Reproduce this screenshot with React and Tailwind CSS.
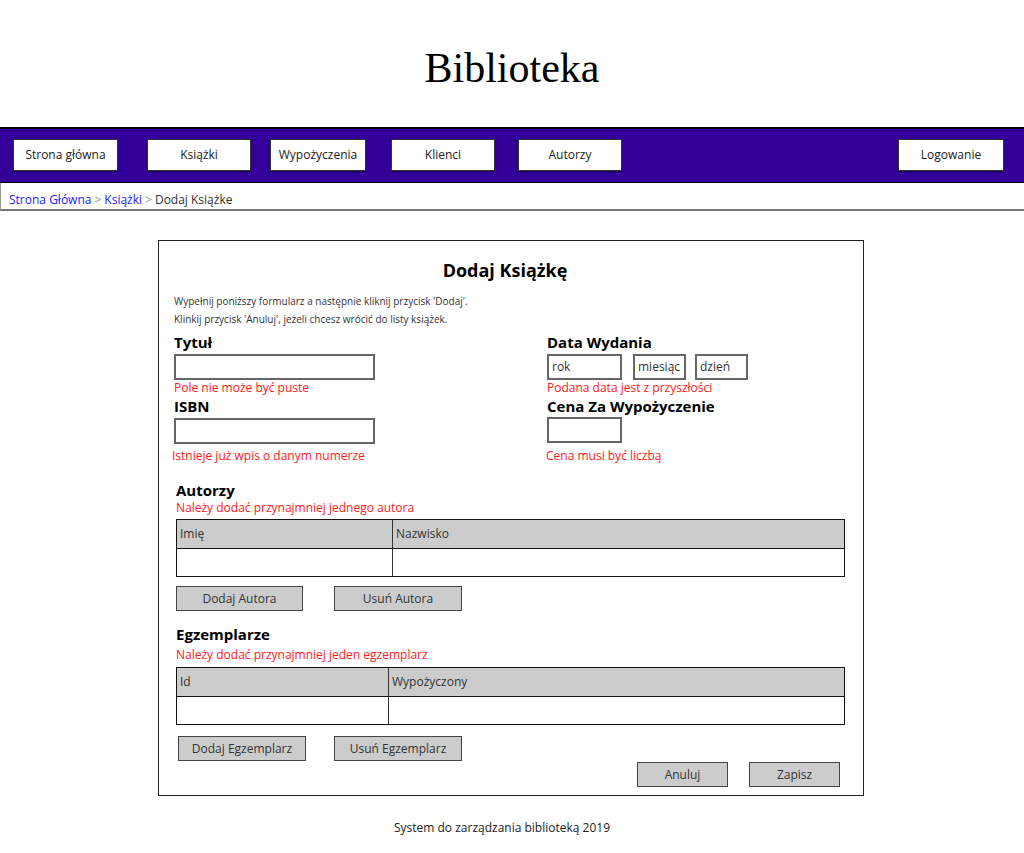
import React from "react";

const navItems = [
  { label: "Strona główna", cls: "w-[105px]" },
  { label: "Książki", cls: "w-[104px] ml-[29px]" },
  { label: "Wypożyczenia", cls: "w-[96px] ml-[19px]" },
  { label: "Klienci", cls: "w-[104px] ml-[25px]" },
  { label: "Autorzy", cls: "w-[104px] ml-[23px]" },
];

function NavButton({ label, cls }) {
  return (
    <div
      className={`h-[32px] bg-white border border-[#333] shadow-[0_1px_1px_rgba(0,0,0,0.4)] flex items-center justify-center text-[12px] text-[#222] ${cls}`}
    >
      {label}
    </div>
  );
}

function GrayButton({ children, cls = "" }) {
  return (
    <div
      className={`h-[25px] bg-[#cccccc] border-[1.5px] border-[#444] flex items-center justify-center text-[12px] text-[#333] ${cls}`}
    >
      {children}
    </div>
  );
}

function Box({ cls = "", children }) {
  return (
    <div
      className={`h-[26px] border-2 border-[#666] bg-white px-[3px] flex items-center text-[12px] text-[#333] ${cls}`}
    >
      {children}
    </div>
  );
}

function Label({ children, cls = "" }) {
  return (
    <div className={`h-[20px] leading-[20px] text-[15px] font-bold text-black ${cls}`}>
      {children}
    </div>
  );
}

function Err({ children, cls = "" }) {
  return (
    <div className={`h-[16px] leading-[16px] text-[12px] text-[#ff1a1a] ${cls}`}>
      {children}
    </div>
  );
}

function Table({ left, right, split }) {
  return (
    <div className="w-[669px] border-[1.5px] border-[#111] text-[12px] text-[#333]">
      <div className="flex h-[29px] bg-[#cccccc] border-b-[1.5px] border-[#111]">
        <div className={`${split} border-r border-[#333] px-[3px] flex items-center`}>{left}</div>
        <div className="flex-1 px-[3px] flex items-center">{right}</div>
      </div>
      <div className="flex h-[27px] bg-white">
        <div className={`${split} border-r border-[#333]`} />
        <div className="flex-1" />
      </div>
    </div>
  );
}

export default function App() {
  return (
    <div className="min-h-[853px] bg-white font-['Open_Sans',sans-serif]">
      <h1 className="h-[127px] pt-[44px] text-center text-[42px] leading-[48px] font-['Liberation_Serif',serif] text-black">
        Biblioteka
      </h1>

      {/* NAV */}
      <nav className="h-[56px] bg-[#330099] border-t-2 border-b border-black flex items-start pt-[10px] pl-[13px] pr-[20px]">
        {navItems.map((n) => (
          <NavButton key={n.label} {...n} />
        ))}
        <NavButton label="Logowanie" cls="w-[106px] ml-auto" />
      </nav>

      {/* BREADCRUMB */}
      <div className="h-[28px] border-b-2 border-[#777] border-l border-l-[#999] pt-[8px] leading-[18px] pl-[8px] text-[12px] text-[#333]">
        <span className="text-[#2222ff]">Strona Główna</span>
        <span className="text-[#999] mx-[3px]">&gt;</span>
        <span className="text-[#2222ff]">Książki</span>
        <span className="text-[#999] mx-[3px]">&gt;</span>
        <span>Dodaj Książke</span>
      </div>

      {/* FORM PANEL */}
      <div className="ml-[158px] mt-[29px] w-[706px] h-[556px] border border-[#222] pt-[17px] pl-[15px]">
        <div className="h-[24px] leading-[24px] text-center text-[18px] font-bold text-black pr-[27px]">
          Dodaj Książkę
        </div>
        <div className="mt-[10px] text-[10px] leading-[18px] text-[#333]">
          <div>Wypełnij poniższy formularz a następnie kliknij przycisk 'Dodaj'.</div>
          <div>Klinkij przycisk 'Anuluj', jeżeli chcesz wrócić do listy książek.</div>
        </div>

        <div className="grid grid-cols-[373px_1fr] mt-[4px]">
          <div>
            <Label>Tytuł</Label>
            <Box cls="mt-[2px] w-[201px]" />
            <Err>Pole nie może być puste</Err>
            <Label>ISBN</Label>
            <Box cls="mt-[2px] w-[201px]" />
            <Err cls="mt-[4px] -ml-[2px]">Istnieje już wpis o danym numerze</Err>
          </div>
          <div>
            <Label>Data Wydania</Label>
            <div className="mt-[2px] flex">
              <Box cls="w-[75px]">rok</Box>
              <Box cls="w-[53px] ml-[11px]">miesiąc</Box>
              <Box cls="w-[53px] ml-[9px]">dzień</Box>
            </div>
            <Err>Podana data jest z przyszłości</Err>
            <Label>Cena Za Wypożyczenie</Label>
            <Box cls="mt-[1px] w-[75px]" />
            <Err cls="mt-[5px] -ml-[1px]">Cena musi być liczbą</Err>
          </div>
        </div>

        <div className="pl-[2px]">
          <Label cls="mt-[16px]">Autorzy</Label>
          <Err>Należy dodać przynajmniej jednego autora</Err>
          <div className="mt-[3px]">
            <Table left="Imię" right="Nazwisko" split="w-[216px]" />
          </div>
          <div className="mt-[9px] flex">
            <GrayButton cls="w-[127px]">Dodaj Autora</GrayButton>
            <GrayButton cls="w-[128px] ml-[31px]">Usuń Autora</GrayButton>
          </div>

          <Label cls="mt-[13px]">Egzemplarze</Label>
          <Err cls="mt-[3px]">Należy dodać przynajmniej jeden egzemplarz</Err>
          <div className="mt-[4px]">
            <Table left="Id" right="Wypożyczony" split="w-[212px]" />
          </div>
          <div className="mt-[11px] flex">
            <GrayButton cls="w-[128px] ml-[2px]">Dodaj Egzemplarz</GrayButton>
            <GrayButton cls="w-[128px] ml-[28px]">Usuń Egzemplarz</GrayButton>
          </div>
          <div className="mt-[1px] flex justify-end pr-[23px]">
            <GrayButton cls="w-[91px]">Anuluj</GrayButton>
            <GrayButton cls="w-[91px] ml-[21px]">Zapisz</GrayButton>
          </div>
        </div>
      </div>

      <div className="mt-[24px] h-[16px] leading-[16px] text-center text-[12px] text-[#222] pr-[20px]">
        System do zarządzania biblioteką 2019
      </div>
    </div>
  );
}
